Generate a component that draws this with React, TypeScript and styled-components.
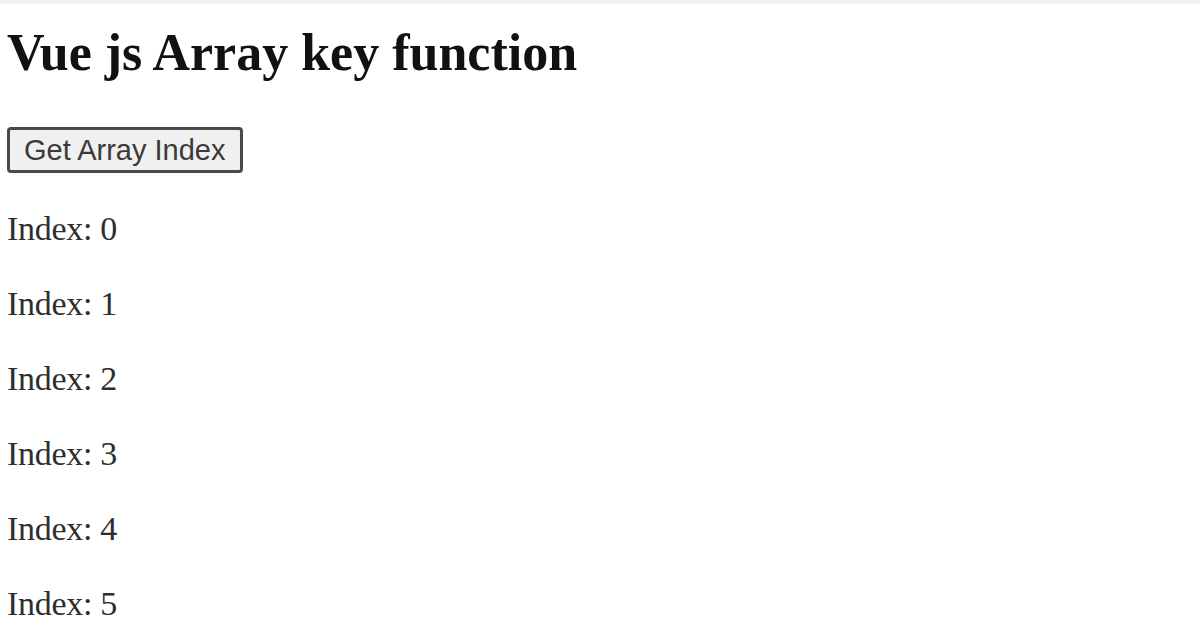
import React from 'react';
import styled, { createGlobalStyle } from 'styled-components';

const GlobalStyle = createGlobalStyle`
  html, body {
    margin: 0;
    padding: 0;
    background: #fff;
  }
`;

const Page = styled.div`
  display: flex;
  flex-direction: column;
  align-items: flex-start;
  padding: 19px 7px 0;
  border-top: 4px solid #f1f1f1;
  font-family: "Liberation Serif", "Times New Roman", serif;
  height: 605px;
  overflow: hidden;
`;

const Title = styled.h1`
  margin: 0;
  font-size: 52px;
  line-height: 60px;
  font-weight: 700;
  color: #111;
`;

const IndexButton = styled.button`
  box-sizing: border-box;
  margin: 44px 0 0;
  min-height: 46px;
  padding: 0 14px;
  font-family: "Liberation Sans", Arial, sans-serif;
  font-size: 29px;
  line-height: 40px;
  color: #3a3a3a;
  background: #f0f0f0;
  border: 3px solid #4a4a4a;
  border-radius: 4px;
`;

const List = styled.div`
  margin-top: 18px;
  display: flex;
  flex-direction: column;
`;

const Row = styled.p`
  margin: 0;
  font-size: 34px;
  line-height: 75px;
  color: #2e2e2e;
  letter-spacing: -0.3px;
`;

const items = ['a', 'b', 'c', 'd', 'e', 'f'];

export default function App() {
  return (
    <>
      <GlobalStyle />
      <Page>
        <Title>Vue js Array key function</Title>
        <IndexButton>Get Array Index</IndexButton>
        <List>
          {items.map((item, index) => (
            <Row key={item}>Index: {index}</Row>
          ))}
        </List>
      </Page>
    </>
  );
}
